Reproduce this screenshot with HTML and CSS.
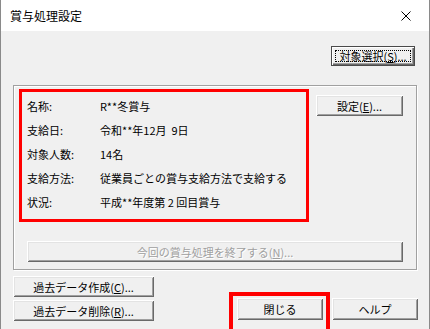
FILE: index.html
```html
<!DOCTYPE html>
<html lang="ja">
<head>
<meta charset="utf-8">
<title>賞与処理設定</title>
<link rel="stylesheet" href="styles.css">
</head>
<body>
<div class="window">
  <div class="titlebar">
    <span class="title">賞与処理設定</span>
    <svg class="close" width="10" height="10" viewBox="0 0 10 10"><path d="M0.5 0.5 L9.5 9.5 M9.5 0.5 L0.5 9.5" stroke="#000" stroke-width="1" fill="none"/></svg>
  </div>
  <div class="client">
    <div class="top-row">
      <button class="btn btn-default btn-select"><span class="focus">対象選択(<u>S</u>)...</span></button>
    </div>
    <div class="group">
      <div class="group-top">
        <div class="info">
          <div class="row"><span class="label">名称:</span><span class="value">R**冬賞与</span></div>
          <div class="row"><span class="label">支給日:</span><span class="value">令和**年12月&nbsp;&nbsp;9日</span></div>
          <div class="row"><span class="label">対象人数:</span><span class="value">14名</span></div>
          <div class="row"><span class="label">支給方法:</span><span class="value">従業員ごとの賞与支給方法で支給する</span></div>
          <div class="row"><span class="label">状況:</span><span class="value">平成**年度第&nbsp;2&nbsp;回目賞与</span></div>
        </div>
        <button class="btn btn-settings">設定(<u>E</u>)...</button>
      </div>
      <button class="btn btn-disabled btn-finish" disabled>今回の賞与処理を終了する(<u>N</u>)...</button>
    </div>
    <div class="bottom">
      <div class="past">
        <button class="btn btn-past">過去データ作成(<u>C</u>)...</button>
        <button class="btn btn-past">過去データ削除(<u>R</u>)...</button>
      </div>
      <div class="actions">
        <span class="mark"><button class="btn btn-action">閉じる</button></span>
        <button class="btn btn-action">ヘルプ</button>
      </div>
    </div>
  </div>
</div>
</body>
</html>
```
FILE: styles.css
```css
* { box-sizing: border-box; }
html, body {
  margin: 0;
  padding: 0;
  background: #f0f0f0;
}
body {
  font-family: "Noto Sans CJK JP", "Noto Sans", sans-serif;
  font-size: 11px;
  color: #000;
}
.window {
  width: 430px;
  height: 329px;
  border-left: 1px solid #8a8a8a;
  border-right: 1px solid #8a8a8a;
  background: #f0f0f0;
  overflow: hidden;
}
.titlebar {
  height: 31px;
  background: #fff;
  display: flex;
  align-items: center;
  padding-left: 9px;
}
.title {
  font-size: 12px;
  line-height: 16px;
}
.close {
  margin-left: auto;
  margin-right: 18px;
}
.client {
  padding: 0 12px 0 12px;
}
.btn {
  font-family: inherit;
  font-size: 11px;
  color: #000;
  background: #f0f0f0;
  border: none;
  padding: 0;
  margin: 0;
  display: flex;
  align-items: center;
  justify-content: center;
  line-height: 14px;
  box-shadow: inset 1px 1px 0 #fff, inset -1px -1px 0 #696969, inset 2px 2px 0 #e3e3e3, inset -2px -2px 0 #a0a0a0;
}
.btn u { text-decoration: underline; text-underline-offset: 1px; }
.top-row {
  display: flex;
  justify-content: flex-end;
  margin-top: 15px;
}
.btn-select {
  width: 84px;
  height: 20px;
  margin-right: 2px;
}
.btn-default {
  border: 1px solid #4a4a4a;
  box-shadow: inset 1px 1px 0 #fff, inset -1px -1px 0 #696969, inset -2px -2px 0 #a0a0a0;
}
.focus {
  display: flex;
  align-items: center;
  justify-content: center;
  width: calc(100% - 6px);
  height: calc(100% - 6px);
  border: 1px dotted #000;
}
.group {
  margin-top: 19px;
  height: 185px;
  border: 1px solid #a0a0a0;
  box-shadow: inset 1px 1px 0 #fff, 1px 1px 0 #fff;
  padding: 3px 0 0 5px;
}
.group-top {
  display: flex;
  align-items: flex-start;
}
.info {
  width: 290px;
  height: 133px;
  border: 3px solid #ff0000;
  padding: 2px 0 0 5px;
}
.row {
  display: flex;
  height: 24px;
  line-height: 24px;
  white-space: nowrap;
}
.label {
  width: 73px;
  flex: none;
}
.btn-settings {
  width: 87px;
  height: 21px;
  margin-left: 7px;
  margin-top: 6px;
}
.btn-finish {
  width: 376px;
  height: 21px;
  margin-top: 19px;
  margin-left: 8px;
}
.btn-disabled {
  color: #a0a0a0;
  text-shadow: 1px 1px 0 #fff;
}
.bottom {
  display: flex;
  margin-top: 6px;
}
.past {
  display: flex;
  flex-direction: column;
  gap: 3px;
}
.btn-past {
  width: 141px;
  height: 21px;
}
.actions {
  display: flex;
  gap: 9px;
  margin-left: auto;
  margin-right: -1px;
  margin-top: 22px;
}
.btn-action {
  width: 86px;
  height: 22px;
}
.mark {
  position: relative;
  display: block;
}
.mark::after {
  content: "";
  position: absolute;
  top: -6px;
  left: -8px;
  right: -7px;
  bottom: -14px;
  border: 4px solid #ff0000;
  pointer-events: none;
}
```
